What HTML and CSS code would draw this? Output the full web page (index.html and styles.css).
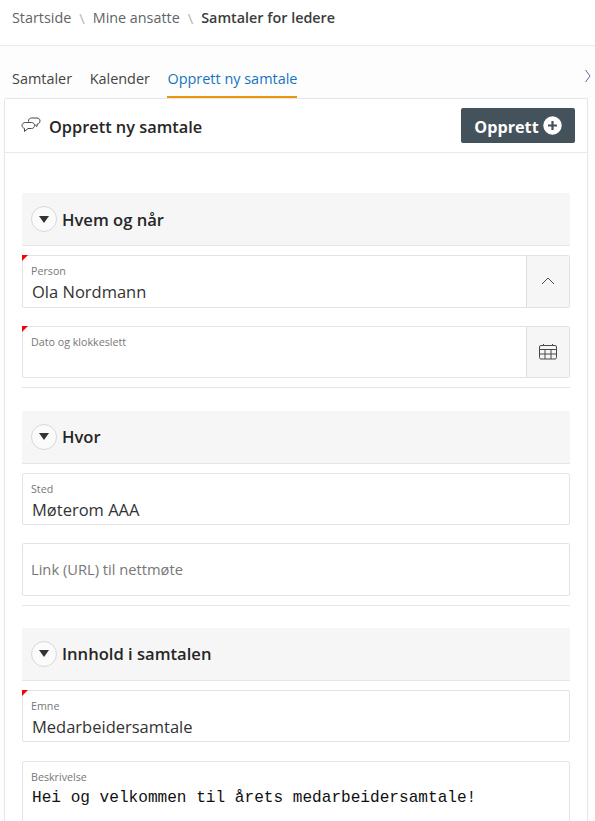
FILE: index.html
```html
<!DOCTYPE html>
<html lang="no">
<head>
<meta charset="utf-8">
<title>Opprett ny samtale</title>
<link rel="stylesheet" href="styles.css">
</head>
<body>
<nav class="crumbs">
  <span>Startside</span><span class="sep">\</span><span>Mine ansatte</span><span class="sep">\</span><strong>Samtaler for ledere</strong>
</nav>
<div class="tabs">
  <span class="tab">Samtaler</span>
  <span class="tab">Kalender</span>
  <span class="tab active">Opprett ny samtale</span>
  <svg class="tab-next" width="6" height="14" viewBox="0 0 6 14"><path d="M0.5 1 L5 7 L0.5 13" fill="none" stroke="#5a6b9a" stroke-width="1"/></svg>
</div>
<main class="card">
  <header class="card-head">
    <h1 class="card-title">
      <svg class="chat-icon" width="20" height="20" viewBox="0 0 20 20" fill="none" stroke="#4a4640" stroke-width="1">
        <path d="M7.5 5.5 V5 C7.5 3.2 8.8 2 10.5 2 H16 C17.8 2 19 3.2 19 5 C19 6.8 17.8 8 16.2 8 L16 10.5 L13.8 8.6"/>
        <path d="M4.5 6.5 H10.5 C12.4 6.5 13.5 7.8 13.5 9.5 C13.5 11.2 12.4 12.5 10.5 12.5 H7 L3.5 15.5 V12.4 C2 12 1 10.9 1 9.5 C1 7.8 2.5 6.5 4.5 6.5 Z"/>
      </svg>
      <span class="title-text">Opprett ny samtale</span>
    </h1>
    <button class="primary"><span class="btn-text">Opprett</span><svg width="19" height="19" viewBox="0 0 19 19"><circle cx="9.5" cy="9.5" r="9.2" fill="#fff"/><path d="M9.5 5 V14 M5 9.5 H14" stroke="#44525c" stroke-width="2.2"/></svg></button>
  </header>
  <div class="body">
    <section class="group">
      <h2 class="group-head"><span class="toggle"><i></i></span>Hvem og når</h2>
      <div class="field req has-btn"><div class="inner"><label>Person</label><div class="value">Ola Nordmann</div></div>
        <div class="side"><svg width="14" height="8" viewBox="0 0 14 8"><path d="M1 7 L7 1 L13 7" fill="none" stroke="#3f4f63" stroke-width="1"/></svg></div></div>
      <div class="field req has-btn"><div class="inner"><label>Dato og klokkeslett</label><div class="value"></div></div>
        <div class="side"><svg width="18" height="16" viewBox="0 0 18 16" fill="none" stroke="#4a4a4a" stroke-width="1"><rect x="0.5" y="1.5" width="17" height="13.5" rx="1.5"/><path d="M0.5 5.5 H17.5 M0.5 10 H17.5 M6 5.5 V15 M12 5.5 V15 M4.5 0 V2 M13.5 0 V2"/></svg></div></div>
    </section>
    <section class="group">
      <h2 class="group-head"><span class="toggle"><i></i></span>Hvor</h2>
      <div class="field"><div class="inner"><label>Sted</label><div class="value">Møterom AAA</div></div></div>
      <div class="field"><div class="inner placeholder">Link (URL) til nettmøte</div></div>
    </section>
    <section class="group">
      <h2 class="group-head"><span class="toggle"><i></i></span>Innhold i samtalen</h2>
      <div class="field req"><div class="inner"><label>Emne</label><div class="value">Medarbeidersamtale</div></div></div>
      <div class="field area"><div class="inner"><label>Beskrivelse</label><div class="mono">Hei og velkommen til årets medarbeidersamtale!</div></div></div>
    </section>
  </div>
</main>
</body>
</html>
```
FILE: styles.css
```css
* { box-sizing: border-box; }
html, body { margin: 0; height: 821px; overflow: hidden; }
body { background: #fdfdfd; font-family: "Open Sans", "Noto Sans", sans-serif; color: #2b2b2b; }
.crumbs {
  height: 46px; background: #fff; border-bottom: 1px solid #e9e9e9;
  display: flex; align-items: flex-start; padding: 9px 0 0 12px;
  font-size: 14.35px; line-height: 18px; color: #5f6468;
}
.crumbs .sep { margin: 0 8px; color: #b5b5b5; font-size: 15px; }
.crumbs strong { color: #3c3c3c; font-weight: 600; }
.tabs {
  height: 52px; position: relative; display: flex; align-items: flex-end; padding-left: 12px; gap: 17.5px;
  font-size: 14.45px; color: #444;
}
.tab { height: 34px; line-height: 30px; white-space: nowrap; }
.tab.active { color: #1673c2; border-bottom: 2px solid #e8960c; }
.tab-next { position: absolute; left: 585px; top: 23px; }
.card {
  margin-left: 4px; width: 584px; height: 730px; background: #fff;
  border: 1px solid #e6e6e6; border-bottom: 0; border-radius: 2px 2px 0 0;
}
.card-head {
  height: 54px; border-bottom: 1px solid #e9e9e9; display: flex; align-items: center;
  justify-content: space-between; padding: 0 12px 0 16px;
}
.card-title { margin: 0; font-size: 16.35px; font-weight: 600; color: #262626; display: flex; align-items: center; gap: 8px; }
.title-text, .btn-text { padding-top: 2px; }
.chat-icon { flex: none; }
.primary {
  width: 114px; height: 35px; background: #44525c; color: #fff; border: 0; border-radius: 2px;
  font: 700 16.2px "Open Sans", sans-serif; display: flex; align-items: center; justify-content: center; gap: 4px; padding: 0;
}
.body { padding: 40.3px 17px 0 17px; }
.group { margin-bottom: 22.3px; border-bottom: 1px solid #e6e6e6; }
.group:last-child { border-bottom: 0; }
.group-head {
  margin: 0 0 9.1px; height: 52.9px; background: #f6f6f6; border-bottom: 1px solid #e6e6e6;
  display: flex; align-items: center; padding-left: 9px; gap: 5px;
  font-size: 16.6px; font-weight: 600; color: #262626;
}
.toggle {
  width: 26px; height: 26px; border-radius: 50%; border: 1px solid #d8d8d8; background: #fbfbfb;
  display: flex; align-items: center; justify-content: center;
}
.toggle i { width: 0; height: 0; border-left: 5px solid transparent; border-right: 5px solid transparent; border-top: 7px solid #333; }
.field {
  position: relative; display: flex; height: 52.4px; margin-bottom: 18.3px; background: #fff;
  border: 1px solid #e3e3e3; border-radius: 2px;
}
.group .field:last-child { margin-bottom: 9px; }
.field.req::before {
  content: ""; position: absolute; left: -1px; top: -1px; width: 0; height: 0;
  border-top: 6px solid #ff0000; border-right: 6px solid transparent;
}
.inner { flex: 1; padding: 8px 9px 0; min-width: 0; }
.field label { display: block; font-size: 10.7px; line-height: 14px; margin: 0 0 2px -1px; color: #777; }
.value { font-size: 16.5px; line-height: 23px; color: #333; }
.inner.placeholder { font-size: 14.7px; color: #777; padding: 15px 8px 0; line-height: 20px; }
.side {
  width: 43px; flex: none; background: #f6f6f6; border-left: 1px solid #dedede;
  display: flex; align-items: center; justify-content: center;
}
.field.area { height: 90px; }
.mono { font-family: "Liberation Mono", monospace; font-size: 16.1px; line-height: 23px; margin-top: 3px; color: #111; white-space: nowrap; }
```
